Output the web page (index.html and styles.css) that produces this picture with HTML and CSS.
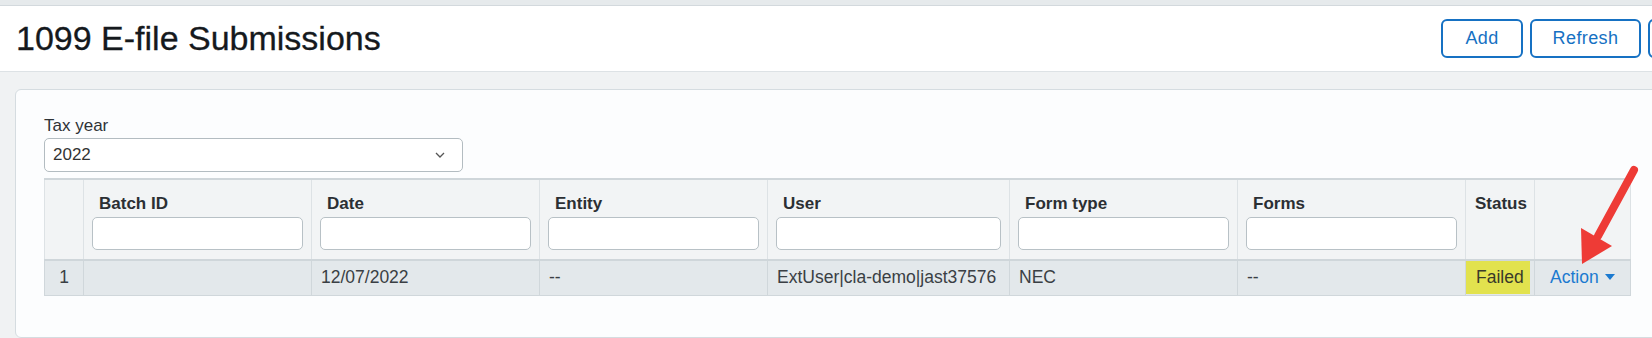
FILE: index.html
```html
<!DOCTYPE html>
<html lang="en">
<head>
    <meta charset="UTF-8">
    <meta name="viewport" content="width=device-width, initial-scale=1.0">
    <title>1099 E-file Submissions</title>
    <link rel="stylesheet" href="styles.css">
</head>
<body>
    <div class="page">
        <div class="topbar"></div>
        <header class="page-head">
            <h1>1099 E-file Submissions</h1>
            <div class="actions">
                <button class="btn btn-add">Add</button>
                <button class="btn btn-refresh">Refresh</button>
                <button class="btn btn-more" title="Export"></button>
            </div>
        </header>
        <main class="content">
            <section class="card">
                <label class="field-label">Tax year</label>
                <div class="select">
                    <span>2022</span>
                    <svg class="chevron" width="10" height="6" viewBox="0 0 10 6">
                        <path d="M1 1 L5 5 L9 1" fill="none" stroke="#555" stroke-width="1.3"/>
                    </svg>
                </div>
                <div class="table-wrap">
                    <table class="grid">
                        <colgroup>
                            <col class="c-num">
                            <col class="c-std">
                            <col class="c-std">
                            <col class="c-std">
                            <col class="c-user">
                            <col class="c-std">
                            <col class="c-std">
                            <col class="c-status">
                            <col class="c-action">
                        </colgroup>
                        <thead>
                            <tr>
                                <th></th>
                                <th><div class="th-label">Batch ID</div><input class="filter" type="text"></th>
                                <th><div class="th-label">Date</div><input class="filter" type="text"></th>
                                <th><div class="th-label">Entity</div><input class="filter" type="text"></th>
                                <th><div class="th-label">User</div><input class="filter" type="text"></th>
                                <th><div class="th-label">Form type</div><input class="filter" type="text"></th>
                                <th><div class="th-label">Forms</div><input class="filter" type="text"></th>
                                <th class="th-top"><div class="th-label">Status</div></th>
                                <th></th>
                            </tr>
                        </thead>
                        <tbody>
                            <tr>
                                <td class="num">1</td>
                                <td></td>
                                <td>12/07/2022</td>
                                <td>--</td>
                                <td>ExtUser|cla-demo|jast37576</td>
                                <td>NEC</td>
                                <td>--</td>
                                <td class="status"><span class="failed">Failed</span></td>
                                <td class="action"><a href="#">Action<span class="caret"></span></a></td>
                            </tr>
                        </tbody>
                    </table>
                    <!-- annotation arrow over the grid -->
                    <svg class="arrow" width="130" height="110" viewBox="0 0 130 110">
                        <line x1="70" y1="6" x2="34" y2="72" stroke="#ee3b36" stroke-width="8" stroke-linecap="round"/>
                        <polygon points="17,64 48,82 18,100" fill="#ee3b36"/>
                    </svg>
                </div>
            </section>
        </main>
    </div>
</body>
</html>
```

FILE: styles.css
```css
* {
    box-sizing: border-box;
}
body {
    margin: 0;
    background-color: #f0f2f3;
    color: #333;
    font-family: "Liberation Sans", Arial, sans-serif;
    overflow: hidden;
}
.page {
    width: 1776px;
}
.topbar {
    height: 6px;
    background-color: #e6eaec;
    border-bottom: 1px solid #d3d9dd;
}
.page-head {
    height: 66px;
    display: flex;
    align-items: center;
    padding: 0 16px;
    background-color: #fff;
    border-bottom: 1px solid #dde2e5;
}
.page-head h1 {
    margin: 0;
    font-size: 34px;
    font-weight: 400;
    color: #15191d;
    -webkit-text-stroke: 0.3px #15191d;
}
.actions {
    margin-left: auto;
    display: flex;
    gap: 7px;
}
.btn {
    height: 39px;
    border: 2px solid #1671c3;
    border-radius: 6px;
    background-color: #fff;
    color: #1671c3;
    font-family: inherit;
    font-size: 18px;
    letter-spacing: 0.4px;
}
.btn-add {
    width: 82px;
}
.btn-refresh {
    width: 111px;
}
.btn-more {
    width: 112px;
}
.content {
    padding: 17px 0 0 15px;
}
.card {
    width: 1740px;
    height: 249px;
    padding: 24px 0 0 28px;
    background-color: #fcfdfe;
    border: 1px solid #d5dce0;
    border-radius: 6px;
}
.field-label {
    display: block;
    font-size: 17px;
    line-height: 24px;
    color: #2f3337;
}
.select {
    width: 419px;
    height: 34px;
    display: flex;
    align-items: center;
    justify-content: space-between;
    padding: 0 17px 0 8px;
    background-color: #fff;
    border: 1px solid #b3bcc1;
    border-radius: 5px;
    font-size: 17px;
    color: #333;
}
.table-wrap {
    position: relative;
    margin-top: 6px;
    width: 1585px;
}
.grid {
    width: 1585px;
    table-layout: fixed;
    border-collapse: collapse;
    font-size: 17.5px;
}
.c-num { width: 39px; }
.c-std { width: 228px; }
.c-user { width: 242px; }
.c-status { width: 69px; }
.c-action { width: 96px; }
.grid th {
    padding: 12px 8px 9px 8px;
    background-color: #f2f4f5;
    border: 1px solid #dde2e5;
    border-top: 2px solid #cfd6da;
    border-bottom: 2px solid #cfd6da;
    text-align: left;
    vertical-align: top;
    font-size: 17px;
    color: #2b2f33;
}
.th-label {
    padding-left: 7px;
    line-height: 24px;
    white-space: nowrap;
}
.grid th.th-top {
    padding-left: 9px;
}
.th-top .th-label {
    padding-left: 0;
}
.filter {
    display: block;
    width: 100%;
    height: 33px;
    margin-top: 1px;
    border: 1px solid #b8c1c6;
    border-radius: 5px;
    background-color: #fff;
}
.grid td {
    height: 35px;
    padding: 0 9px;
    background-color: #e3e8eb;
    border: 1px solid #d0d7db;
    color: #3a3f44;
    white-space: nowrap;
    vertical-align: middle;
}
.grid td.num {
    text-align: center;
}
.grid td.status {
    padding: 0 4px 0 0;
}
.failed {
    display: block;
    height: 33px;
    line-height: 33px;
    padding-left: 10px;
    background-color: #e2e24e;
    color: #3a3a2a;
}
.grid td.action {
    padding-left: 15px;
}
.action a {
    color: #1c7ad0;
    text-decoration: none;
}
.caret {
    display: inline-block;
    margin-left: 6px;
    vertical-align: 3px;
    border-left: 5.5px solid transparent;
    border-right: 5.5px solid transparent;
    border-top: 6px solid #1c7ad0;
}
.arrow {
    position: absolute;
    left: 1520px;
    top: -14px;
}
```
